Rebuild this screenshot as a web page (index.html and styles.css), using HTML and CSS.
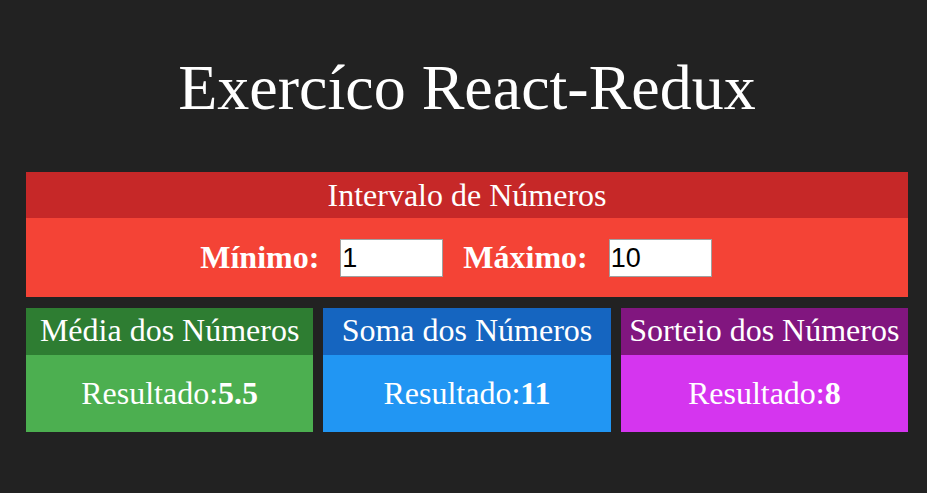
FILE: index.html
```html
<!DOCTYPE html>
<html lang="pt-BR">
<head>
  <meta charset="UTF-8">
  <title>Exercíco React-Redux</title>
  <link rel="stylesheet" href="styles.css">
</head>
<body>

<div id="app">
  <h1 class="titulo">Exercíco React-Redux</h1>

  <div class="card vermelho">
    <div class="cardHeader">Intervalo de Números</div>
    <div class="cardBody intervalo">
      <label for="minimo">Mínimo:</label>
      <input type="number" id="minimo" value="1">
      <label for="maximo">Máximo:</label>
      <input type="number" id="maximo" value="10">
    </div>
  </div>

  <div class="linha">
    <div class="card verde">
      <div class="cardHeader">Média dos Números</div>
      <div class="cardBody">Resultado:<strong>5.5</strong></div>
    </div>
    <div class="card azul">
      <div class="cardHeader">Soma dos Números</div>
      <div class="cardBody">Resultado:<strong>11</strong></div>
    </div>
    <div class="card roxo">
      <div class="cardHeader">Sorteio dos Números</div>
      <div class="cardBody">Resultado:<strong>8</strong></div>
    </div>
  </div>
</div>

</body>
</html>
```

FILE: styles.css
```css
body {
  font-family: "Liberation Serif", "Times New Roman", serif;
  background-color: #222222;
  color: #fff;
  margin: 0;
}

#app {
  width: 882px;
  padding: 0 0 0 26px;
}

.titulo {
  font-weight: normal;
  font-size: 64px;
  text-align: center;
  margin: 0;
  padding-top: 50px;
  height: 172px;
  line-height: 76px;
  box-sizing: border-box;
}

.card {
  display: flex;
  flex-direction: column;
}

.cardHeader {
  height: 46px;
  line-height: 46px;
  font-size: 32px;
  text-align: center;
}

.cardBody {
  display: flex;
  align-items: center;
  justify-content: center;
  font-size: 32px;
  height: 77px;
}

.intervalo {
  height: 79px;
}

.intervalo label {
  font-weight: bold;
  font-size: 32px;
  margin-right: 21px;
}

.intervalo input {
  width: 103px;
  height: 38px;
  box-sizing: border-box;
  font-family: "Liberation Sans", Arial, sans-serif;
  font-size: 27px;
  padding: 1px 0 0 1px;
  border: 1px solid #a0a0a0;
  margin-right: 22px;
  -moz-appearance: textfield;
}

.intervalo #minimo {
  margin-right: 20px;
}

.intervalo input::-webkit-outer-spin-button,
.intervalo input::-webkit-inner-spin-button {
  -webkit-appearance: none;
  margin: 0;
}

.linha {
  display: flex;
  gap: 10px;
  margin-top: 11px;
}

.linha .card {
  flex: 1;
}

.linha .cardHeader {
  height: 47px;
  line-height: 45px;
}

.vermelho .cardHeader { background-color: #c62828; }
.vermelho .cardBody { background-color: #f44336; }

.verde .cardHeader { background-color: #2e7d32; }
.verde .cardBody { background-color: #4caf50; }

.azul .cardHeader { background-color: #1565c0; }
.azul .cardBody { background-color: #2196f3; }

.roxo .cardHeader { background-color: #81167f; }
.roxo .cardBody { background-color: #d535ef; }
```
